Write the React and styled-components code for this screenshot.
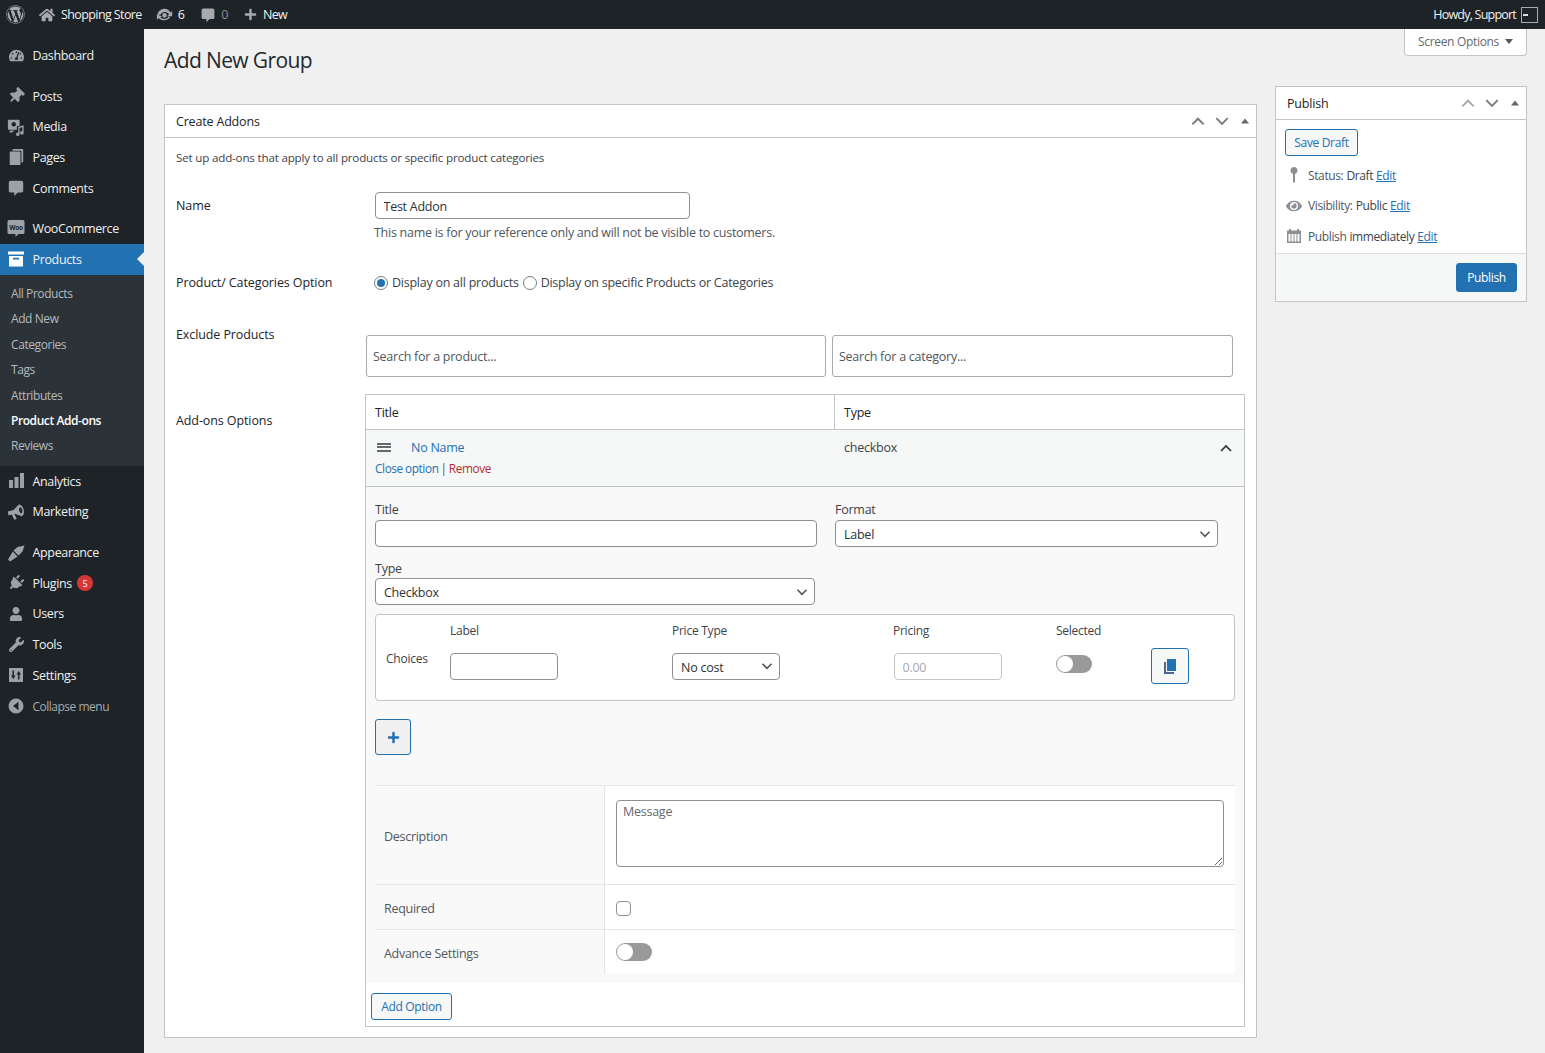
import React from 'react'
import styled, { createGlobalStyle } from 'styled-components'
import {
  FaWordpress, FaHome, FaPlus, FaTachometerAlt, FaThumbtack,
  FaPlug, FaUser, FaWrench, FaEye,
} from 'react-icons/fa'

const chevron = "url(\"data:image/svg+xml,%3Csvg xmlns='http://www.w3.org/2000/svg' width='20' height='20' viewBox='0 0 20 20'%3E%3Cpath d='M5 7.5l5 5 5-5' fill='none' stroke='%2350575e' stroke-width='1.8'/%3E%3C/svg%3E\")"

const GlobalStyle = createGlobalStyle`
  html, body { margin: 0; padding: 0; background: #f0f0f1; }
  body {
    font-family: "Open Sans", "Noto Sans", sans-serif;
    font-size: 12.5px;
    letter-spacing: -0.25px;
    color: #3c434a;
  }
  * { box-sizing: border-box; }
  input, select, textarea, button { font-family: inherit; letter-spacing: inherit; }
`

const Page = styled.div`
  width: 1545px;
  height: 1053px;
  overflow: hidden;
  display: flex;
  flex-direction: column;
`

const TopBar = styled.div`
  height: 29px;
  flex: none;
  background: #1d2327;
  color: #f0f0f1;
  display: flex;
  align-items: center;
  justify-content: space-between;
  padding: 0 7px 0 6px;
  letter-spacing: -0.6px;
`

const TopGroup = styled.div`
  display: flex;
  align-items: center;
`

const TopItem = styled.span`
  display: flex;
  align-items: center;
  gap: ${p => p.$gap ?? 5}px;
  margin-left: ${p => p.$left ?? 0}px;
  color: ${p => (p.$dim ? '#8c8f94' : '#f0f0f1')};
  svg { color: #a7aaad; fill: currentColor; flex: none; }
`

const Howdy = styled.span`
  letter-spacing: -0.78px;
`

const Avatar = styled.div`
  width: 17px;
  height: 16px;
  margin-left: 5px;
  border: 1px solid #a7aaad;
  background: #1d2327;
  display: flex;
  align-items: center;
  padding-left: 1px;
  &::before { content: ''; width: 5px; height: 2px; background: #dcdcde; }
`

const Columns = styled.div`
  flex: 1;
  display: flex;
  min-height: 0;
`

const Sidebar = styled.nav`
  width: 144px;
  flex: none;
  background: #1d2327;
  padding-top: 11px;
`

const MenuItem = styled.div`
  position: relative;
  height: 30.7px;
  margin-top: ${p => (p.$sep ? 10 : 0)}px;
  display: flex;
  align-items: center;
  color: ${p => (p.$dim ? '#a7aaad' : '#f0f0f1')};
  background: ${p => (p.$active ? '#2271b1' : 'transparent')};
  font-size: ${p => (p.$dim ? 12 : 12.5)}px;
  letter-spacing: ${p => (p.$dim ? -0.5 : -0.35)}px;
`

const MenuIcon = styled.span`
  width: 32.5px;
  flex: none;
  display: flex;
  justify-content: center;
  color: ${p => (p.$active ? '#fff' : '#9ca1a7')};
  svg { fill: currentColor; }
`

const ActiveArrow = styled.span`
  position: absolute;
  right: 0;
  top: 50%;
  margin-top: -7px;
  border: 7px solid transparent;
  border-left-width: 0;
  border-right-color: #f0f0f1;
`

const Badge = styled.span`
  width: 16px;
  height: 16px;
  margin-left: 5px;
  border-radius: 50%;
  background: #d63638;
  color: #fff;
  font-size: 9px;
  display: flex;
  align-items: center;
  justify-content: center;
`

const SubMenu = styled.div`
  background: #2c3338;
  padding: 6.25px 0 7.05px;
`

const SubItem = styled.div`
  height: 25.4px;
  line-height: 25.4px;
  padding-left: 11px;
  font-size: 12px;
  letter-spacing: -0.42px;
  color: ${p => (p.$current ? '#fff' : '#b4b9be')};
  font-weight: ${p => (p.$current ? 600 : 400)};
`

const Main = styled.main`
  position: relative;
  flex: 1;
  padding: 16px 18px 0 20px;
`

const ScreenTab = styled.div`
  position: absolute;
  top: 0;
  right: 18px;
  width: 123px;
  height: 27px;
  padding-bottom: 2px;
  background: #fff;
  border: 1px solid #c3c4c7;
  border-top: 0;
  border-radius: 0 0 4px 4px;
  display: flex;
  align-items: center;
  justify-content: center;
  gap: 6px;
  color: #646970;
  font-size: 12px;
  letter-spacing: -0.32px;
`

const Caret = styled.span`
  border: 4px solid transparent;
  border-top: 5px solid #50575e;
  border-bottom: 0;
`

const Title = styled.h1`
  margin: 0;
  font-size: 21px;
  font-weight: 400;
  line-height: 30px;
  letter-spacing: -0.62px;
  color: #23282d;
`

const Layout = styled.div`
  margin-top: 11px;
  display: grid;
  grid-template-columns: 1093px 252px;
  gap: 18px;
  align-items: start;
`

const LeftCol = styled.div`
  padding-top: 18px;
`

const Box = styled.section`
  background: #fff;
  border: 1px solid #c3c4c7;
`

const BoxHead = styled.div`
  height: 33px;
  border-bottom: 1px solid #c3c4c7;
  display: flex;
  align-items: center;
  justify-content: space-between;
  padding: 0 6px 0 11px;
  color: #1d2327;
  font-weight: 500;
  letter-spacing: -0.18px;
`

const Handles = styled.div`
  display: flex;
  align-items: center;
  gap: 7.5px;
  color: #787c82;
  svg { display: block; }
`

const TriangleHandle = styled.svg`
  margin-left: 3px;
`

const BoxBody = styled.div`
  padding: 10px 11px 10px;
`

const Intro = styled.div`
  font-size: 11.6px;
  line-height: 20px;
  letter-spacing: -0.18px;
`

const FormRow = styled.div`
  display: flex;
  align-items: flex-start;
  margin-top: ${p => p.$top}px;
`

const RowLabel = styled.div`
  width: 190px;
  flex: none;
  line-height: 20px;
  color: #1d2327;
  font-weight: 500;
  letter-spacing: -0.1px;
  padding-top: ${p => p.$pad ?? 0}px;
`

const Indent = styled.div`
  margin-left: 9px;
`

const TextInput = styled.input`
  display: block;
  height: 27px;
  width: ${p => (p.$w ? `${p.$w}px` : '100%')};
  margin-left: ${p => p.$left ?? 0}px;
  padding: 2px 7.5px 0;
  font-size: 12.5px;
  color: #2c3338;
  background: #fff;
  border: 1px solid ${p => (p.disabled ? '#c3c4c7' : '#8c8f94')};
  border-radius: 4px;
  &::placeholder { color: ${p => (p.disabled ? '#a7aaad' : '#646970')}; opacity: 1; }
`

const SelectBox = styled.select`
  display: block;
  height: 27px;
  width: ${p => (p.$w ? `${p.$w}px` : '100%')};
  padding: 2px 22px 0 8px;
  font-size: 12.5px;
  color: #2c3338;
  background: #fff ${chevron} no-repeat right 3px center / 18px 18px;
  border: 1px solid #8c8f94;
  border-radius: 4px;
  appearance: none;
`

const HelpText = styled.div`
  margin: 4px 0 -1px -1px;
  line-height: 20px;
  color: #50575e;
  letter-spacing: -0.27px;
`

const RadioRow = styled.div`
  margin: 1px 0 0 8px;
  display: flex;
  align-items: center;
  line-height: 20px;
  color: #3c434a;
  letter-spacing: -0.25px;
`

const Radio = styled.input.attrs({ type: 'radio' })`
  appearance: none;
  width: 14px;
  height: 14px;
  margin: 0 4px 0 ${p => p.$left ?? 0}px;
  border: 1px solid #787c82;
  border-radius: 50%;
  background: #fff;
  display: grid;
  place-items: center;
  &:checked::before {
    content: '';
    width: 8px;
    height: 8px;
    border-radius: 50%;
    background: #2271b1;
  }
`

const SearchRow = styled.div`
  margin-top: 11px;
  display: flex;
  gap: 6px;
`

const SearchBox = styled.input`
  height: 42px;
  width: ${p => p.$w}px;
  padding: 0 6px;
  font-size: 12.5px;
  background: #fff;
  border: 1px solid #a7aaad;
  border-radius: 3px;
  &::placeholder { color: #50575e; opacity: 1; }
`

const OptionsTable = styled.div`
  width: 880px;
  margin-left: -1px;
  border: 1px solid #c3c4c7;
`

const TableHead = styled.div`
  height: 35px;
  display: grid;
  grid-template-columns: 468px 1fr;
  border-bottom: 1px solid #c3c4c7;
  color: #1d2327;
  font-weight: 500;
`

const HeadCell = styled.div`
  display: flex;
  align-items: center;
  padding-left: 9px;
  & + & { border-left: 1px solid #c3c4c7; }
`

const OptionRow = styled.div`
  height: 57px;
  background: #f6f7f7;
  border-bottom: 1px solid #c3c4c7;
  padding: 7px 9px 0;
`

const OptionTop = styled.div`
  display: grid;
  grid-template-columns: 36px 433px 1fr 20px;
  align-items: center;
  height: 20px;
  color: #3c434a;
`

const DragIcon = styled.span`
  width: 14px;
  height: 9px;
  margin-left: 2px;
  border-top: 2px solid #646970;
  border-bottom: 2px solid #646970;
  position: relative;
  &::before {
    content: '';
    position: absolute;
    left: 0;
    right: 0;
    top: 1.5px;
    height: 2px;
    background: #646970;
  }
`

const OptionName = styled.span`
  color: #2271b1;
  font-weight: 500;
`

const CollapseUp = styled.span`
  justify-self: end;
  margin: 2px 2px 0 0;
  color: #2c3338;
  display: flex;
`

const OptionLinks = styled.div`
  margin-top: 1px;
  line-height: 20px;
  font-size: 11.8px;
  letter-spacing: -0.38px;
  word-spacing: -0.6px;
  color: #50575e;
`

const Anchor = styled.a`
  color: ${p => (p.$danger ? '#b32d2e' : '#2271b1')};
  text-decoration: ${p => (p.$under ? 'underline' : 'none')};
`

const OptionPanel = styled.div`
  background: #f9f9f9;
  padding: 12px 9px 9px;
`

const FieldGrid = styled.div`
  display: grid;
  grid-template-columns: 442px 383px;
  gap: 18px;
`

const FieldLabel = styled.div`
  line-height: 22px;
  margin: ${p => p.$top ?? 0}px 0 ${p => p.$bottom ?? -1}px;
  color: #3c434a;
`

const ChoicesBox = styled.div`
  margin-top: 9px;
  width: 860px;
  height: 87px;
  background: #fff;
  border: 1px solid #c3c4c7;
  border-radius: 4px;
  padding: 5px 0 0 10px;
  display: grid;
  grid-template-columns: 64px 222px 221px 163px 95px 38px;
  grid-template-rows: 20px 36px;
  row-gap: 8px;
  align-items: center;
`

const ChoiceHead = styled.div`
  line-height: 20px;
  margin-top: 2px;
  font-size: 12px;
  color: #3c434a;
  grid-column: ${p => p.$col};
`

const ChoiceName = styled(ChoiceHead)`
  margin-top: -14px;
`

const ToggleSwitch = styled.span`
  display: block;
  width: 36px;
  height: 18px;
  border-radius: 9px;
  background: #999;
  position: relative;
  margin-top: ${p => p.$up ?? 0}px;
  &::before {
    content: '';
    position: absolute;
    left: 1px;
    top: 1px;
    width: 16px;
    height: 16px;
    border-radius: 50%;
    background: #fff;
  }
`

const IconButton = styled.button`
  width: ${p => p.$w}px;
  height: 36px;
  padding: 0;
  border: 1px solid #2271b1;
  border-radius: 3px;
  background: ${p => p.$bg ?? '#f6f7f7'};
  color: #2271b1;
  display: flex;
  align-items: center;
  justify-content: center;
`

const AddChoice = styled.div`
  margin: 18px 0 30px;
`

const SettingsTable = styled.div`
  width: 860px;
  border-top: 1px solid #e2e4e7;
`

const SettingRow = styled.div`
  display: grid;
  grid-template-columns: 230px 1fr;
  height: ${p => p.$h}px;
  & + & { border-top: 1px solid #e2e4e7; }
`

const SettingName = styled.div`
  display: flex;
  align-items: center;
  padding: 2px 0 0 9px;
  color: #50575e;
  letter-spacing: -0.28px;
  border-right: 1px solid #e2e4e7;
`

const SettingValue = styled.div`
  background: #fff;
  padding: 0 11px;
  display: flex;
  align-items: center;
`

const MessageValue = styled(SettingValue)`
  align-items: flex-start;
  padding-top: 14px;
`

const MessageArea = styled.textarea`
  display: block;
  width: 100%;
  height: 67px;
  padding: 2px 6px;
  font-size: 12.5px;
  border: 1px solid #8c8f94;
  border-radius: 4px;
  &::placeholder { color: #646970; opacity: 1; }
`

const CheckBox = styled.input.attrs({ type: 'checkbox' })`
  appearance: none;
  width: 15px;
  height: 15px;
  margin: 2px 0 0;
  background: #fff;
  border: 1px solid #8c8f94;
  border-radius: 4px;
`

const TableFoot = styled.div`
  height: 43px;
  padding: 10px 0 0 5px;
`

const SecondaryButton = styled.button`
  height: 27px;
  width: ${p => p.$w}px;
  padding: 0;
  font-size: 12px;
  letter-spacing: -0.33px;
  color: #2271b1;
  background: #f6f7f7;
  border: 1px solid #2271b1;
  border-radius: 3px;
`

const PublishBody = styled.div`
  padding: 9px 9px 0;
`

const MetaList = styled.div`
  margin-top: 4px;
  padding-bottom: 1px;
`

const MetaRow = styled.div`
  height: 30.5px;
  display: flex;
  align-items: center;
  font-size: 12px;
  letter-spacing: -0.38px;
  color: #50575e;
  b { font-weight: 500; color: #3c434a; margin-left: 3px; margin-right: 3px; }
`

const MetaIcon = styled.span`
  width: 17px;
  flex: none;
  display: flex;
  justify-content: center;
  margin-right: 6px;
  color: #8c8f94;
  svg { fill: currentColor; }
`

const PublishFoot = styled.div`
  height: 48px;
  background: #f6f7f7;
  border-top: 1px solid #dcdcde;
  display: flex;
  align-items: center;
  justify-content: flex-end;
  padding-right: 9px;
`

const PrimaryButton = styled.button`
  width: 61px;
  height: 29px;
  padding: 0;
  font-size: 12px;
  letter-spacing: -0.33px;
  color: #fff;
  background: #2271b1;
  border: 1px solid #2271b1;
  border-radius: 3px;
`

const IconChevron = ({ up, color = 'currentColor', size = 14 }) => (
  <svg width={size} height={size} viewBox="0 0 14 14">
    <path d={up ? 'M2 10l5-5 5 5' : 'M2 4.5l5 5 5-5'} fill="none" stroke={color} strokeWidth="1.7" />
  </svg>
)

const BoxHandles = ({ dimUp }) => (
  <Handles>
    <IconChevron up color={dimUp ? '#a7aaad' : '#787c82'} size={16} />
    <IconChevron size={16} />
    <TriangleHandle width="10" height="10" viewBox="0 0 10 10"><path d="M1 7.5L5 2.5l4 5z" fill="#646970" /></TriangleHandle>
  </Handles>
)

const UpdatesIcon = () => (
  <svg width="17" height="17" viewBox="0 0 20 20">
    <path d="M10.2 3.3c2.9 0 5.4 1.7 6.5 4.2L19 6v6h-6l2.300-1.700c-.8-1.900-2.700-3.200-5-3.200-2.200 0-4.100 1.300-5 3.200H1.500c1-3.900 4.500-7 8.700-7zM10 8.300a2.700 2.700 0 110 5.400 2.700 2.700 0 010-5.400zM1 10v6l2.300-1.500c1.400 1.500 3.600 2.400 6.700 2.400 3 0 5.600-1.700 6.700-4.200h-2.200c-.9 1.900-2.700 2.500-4.500 2.500-2 0-3.700-.7-4.700-1.900L7 12z" />
  </svg>
)

const CommentIcon = ({ size = 18 }) => (
  <svg width={size} height={size} viewBox="0 0 20 20">
    <path d="M4 2h12c1.100 0 2 .9 2 2v9c0 1.100-.9 2-2 2h-4l-4 4v-4H4c-1.100 0-2-.9-2-2V4c0-1.100.9-2 2-2z" />
  </svg>
)

const MediaIcon = () => (
  <svg width="18" height="18" viewBox="0 0 20 20">
    <path d="M2 2h11a1 1 0 011 1v5.500l-3 .8V13H6l-1 0H2a1 1 0 01-1-1V3a1 1 0 011-1zm5.500 2.500a2.500 2.500 0 100 5 2.500 2.500 0 000-5zM18.500 8v8.500a2 2 0 11-1.500-1.900V10.200l-3 .8v7a2 2 0 11-1.500-1.900V9.600zM3 14v2h3a2.200 2.200 0 012.500-1.500V14z" fillRule="evenodd" />
  </svg>
)

const PagesIcon = () => (
  <svg width="18" height="18" viewBox="0 0 20 20">
    <path d="M7 1h10a1 1 0 011 1v13a1 1 0 01-1 1h-1V4a1 1 0 00-1-1H6V2a1 1 0 011-1zM4 4h10a1 1 0 011 1v13a1 1 0 01-1 1H4a1 1 0 01-1-1V5a1 1 0 011-1z" />
  </svg>
)

const WooIcon = () => (
  <svg width="18" height="19" viewBox="0 0 18 19">
    <path d="M2 1h14a1.500 1.500 0 011.500 1.500v11a1.500 1.500 0 01-1.500 1.500h-4.500L8.500 18v-3H2A1.500 1.500 0 01.500 13.500v-11A1.500 1.500 0 012 1z" />
    <text x="9" y="10.500" textAnchor="middle" fontSize="6.500" fontWeight="700" fill="#1d2327" fontFamily="Open Sans, sans-serif">Woo</text>
  </svg>
)

const ProductsIcon = () => (
  <svg width="18" height="18" viewBox="0 0 18 18">
    <path d="M1 1.500h16v3H1zM2 6h14v10.500H2zM6 7.800v1.700h6V7.800z" fillRule="evenodd" />
  </svg>
)

const AnalyticsIcon = () => (
  <svg width="18" height="18" viewBox="0 0 18 18">
    <path d="M2 8h4v8H2zM7.500 5h4v11h-4zM13 1h4v15h-4z" />
  </svg>
)

const MarketingIcon = () => (
  <svg width="18" height="18" viewBox="0 0 18 18">
    <path
      transform="rotate(-14 9 9)"
      d="M1 6.500h6L13.500 2.500c2.200 0 3.500 2.800 3.500 6s-1.300 6-3.500 6L7.500 10.500H7l1 5.500H5.500L4.300 10.500H1zM14 5.500c-.9 0-1.500 1.300-1.500 3s.6 3 1.500 3 1.500-1.300 1.500-3-.6-3-1.500-3z"
      fillRule="evenodd"
    />
  </svg>
)

const AppearanceIcon = () => (
  <svg width="18" height="18" viewBox="0 0 18 18">
    <path d="M6.500 6.500L10.500 3l7-1.500-2 6-4 4zM5.800 7.500l4.700 5L3 17.500 1 15.500z" />
  </svg>
)

const SettingsIcon = () => (
  <svg width="16" height="16" viewBox="0 0 16 16">
    <path d="M1 1h14v14H1zM4.500 3.500v5H3l2.300 3.500L7.500 8.500H6v-5zM10 12.500h1.500v-5H13L10.700 4 8.500 7.500H10z" fillRule="evenodd" />
  </svg>
)

const CollapseIcon = () => (
  <svg width="16" height="16" viewBox="0 0 16 16">
    <path d="M8 .500a7.500 7.500 0 110 15 7.500 7.500 0 010-15zM10.500 3.800L5 8l5.500 4.200z" fillRule="evenodd" />
  </svg>
)

const PinIcon = () => (
  <svg width="14" height="18" viewBox="0 0 14 18">
    <path d="M7 1a3.600 3.600 0 011 7v8.500H6V8a3.600 3.600 0 011-7z" />
  </svg>
)

const CalendarIcon = () => (
  <svg width="16" height="16" viewBox="0 0 16 16">
    <path d="M1 2.500h2V1h2v1.500h6V1h2v1.500h2V15H1zM2.500 6v7.500h2V6zM5.500 6v7.500h2V6zM8.500 6v7.500h2V6zM11.500 6v7.500h2V6z" fillRule="evenodd" />
  </svg>
)

const CopyIcon = () => (
  <svg width="16" height="17" viewBox="0 0 16 17">
    <path d="M5 1h9v12H5z" fill="#2271b1" />
    <path d="M2 4h2v10h8v2H2z" fill="#50678f" />
  </svg>
)

const menuTop = [
  { label: 'Posts', icon: <FaThumbtack size={16} style={{ transform: 'rotate(45deg)' }} />, sep: true },
  { label: 'Media', icon: <MediaIcon /> },
  { label: 'Pages', icon: <PagesIcon /> },
  { label: 'Comments', icon: <CommentIcon /> },
]

const subItems = ['All Products', 'Add New', 'Categories', 'Tags', 'Attributes', 'Product Add-ons', 'Reviews']

const menuBottom = [
  { label: 'Analytics', icon: <AnalyticsIcon /> },
  { label: 'Marketing', icon: <MarketingIcon /> },
  { label: 'Appearance', icon: <AppearanceIcon />, sep: true },
  { label: 'Plugins', icon: <FaPlug size={16} style={{ transform: 'rotate(45deg)' }} />, badge: 5 },
  { label: 'Users', icon: <FaUser size={14} /> },
  { label: 'Tools', icon: <FaWrench size={15} /> },
  { label: 'Settings', icon: <SettingsIcon /> },
]

const Menu = ({ label, icon, sep, active, badge, dim }) => (
  <MenuItem $sep={sep} $active={active} $dim={dim}>
    <MenuIcon $active={active}>{icon}</MenuIcon>
    {label}
    {badge && <Badge>{badge}</Badge>}
    {active && <ActiveArrow />}
  </MenuItem>
)

export default function App() {
  return (
    <Page>
      <GlobalStyle />
      <TopBar>
        <TopGroup>
          <TopItem><FaWordpress size={19} /></TopItem>
          <TopItem $left={14} $gap={6}><FaHome size={16} />Shopping Store</TopItem>
          <TopItem $left={14} $gap={5}><UpdatesIcon />6</TopItem>
          <TopItem $left={16} $gap={5} $dim><CommentIcon size={16} />0</TopItem>
          <TopItem $left={16} $gap={6}><FaPlus size={13} />New</TopItem>
        </TopGroup>
        <TopGroup>
          <Howdy>Howdy, Support</Howdy>
          <Avatar />
        </TopGroup>
      </TopBar>
      <Columns>
        <Sidebar>
          <Menu label="Dashboard" icon={<FaTachometerAlt size={15} />} />
          {menuTop.map(item => <Menu key={item.label} {...item} />)}
          <Menu label="WooCommerce" icon={<WooIcon />} sep />
          <Menu label="Products" icon={<ProductsIcon />} active />
          <SubMenu>
            {subItems.map(item => (
              <SubItem key={item} $current={item === 'Product Add-ons'}>{item}</SubItem>
            ))}
          </SubMenu>
          {menuBottom.map(item => <Menu key={item.label} {...item} />)}
          <Menu label="Collapse menu" icon={<CollapseIcon />} dim />
        </Sidebar>
        <Main>
          <ScreenTab>Screen Options <Caret /></ScreenTab>
          <Title>Add New Group</Title>
          <Layout>
            <LeftCol>
              <Box>
                <BoxHead>Create Addons <BoxHandles /></BoxHead>
                <BoxBody>
                  <Intro>Set up add-ons that apply to all products or specific product categories</Intro>
                  <FormRow $top={24}>
                    <RowLabel $pad={4}>Name</RowLabel>
                    <Indent>
                      <TextInput $w={315} defaultValue="Test Addon" />
                      <HelpText>This name is for your reference only and will not be visible to customers.</HelpText>
                    </Indent>
                  </FormRow>
                  <FormRow $top={30}>
                    <RowLabel $pad={1}>Product/ Categories Option</RowLabel>
                    <RadioRow>
                      <Radio name="scope" defaultChecked />
                      Display on all products
                      <Radio name="scope" $left={4} />
                      Display on specific Products or Categories
                    </RadioRow>
                  </FormRow>
                  <FormRow $top={31}>
                    <RowLabel $pad={1}>Exclude Products</RowLabel>
                    <SearchRow>
                      <SearchBox $w={460} placeholder="Search for a product..." />
                      <SearchBox $w={401} placeholder="Search for a category..." />
                    </SearchRow>
                  </FormRow>
                  <FormRow $top={17}>
                    <RowLabel $pad={17}>Add-ons Options</RowLabel>
                    <OptionsTable>
                      <TableHead>
                        <HeadCell>Title</HeadCell>
                        <HeadCell>Type</HeadCell>
                      </TableHead>
                      <OptionRow>
                        <OptionTop>
                          <DragIcon />
                          <OptionName>No Name</OptionName>
                          <span>checkbox</span>
                          <CollapseUp><IconChevron up size={14} /></CollapseUp>
                        </OptionTop>
                        <OptionLinks>
                          <Anchor>Close option</Anchor> | <Anchor $danger>Remove</Anchor>
                        </OptionLinks>
                      </OptionRow>
                      <OptionPanel>
                        <FieldGrid>
                          <div>
                            <FieldLabel>Title</FieldLabel>
                            <TextInput />
                          </div>
                          <div>
                            <FieldLabel>Format</FieldLabel>
                            <SelectBox defaultValue="Label"><option>Label</option></SelectBox>
                          </div>
                        </FieldGrid>
                        <FieldLabel $top={11} $bottom={-2}>Type</FieldLabel>
                        <SelectBox $w={440} defaultValue="Checkbox"><option>Checkbox</option></SelectBox>
                        <ChoicesBox>
                          <ChoiceHead $col={2}>Label</ChoiceHead>
                          <ChoiceHead $col={3}>Price Type</ChoiceHead>
                          <ChoiceHead $col={4}>Pricing</ChoiceHead>
                          <ChoiceHead $col={5}>Selected</ChoiceHead>
                          <ChoiceName $col={1}>Choices</ChoiceName>
                          <TextInput $w={108} />
                          <SelectBox $w={108} defaultValue="No cost"><option>No cost</option></SelectBox>
                          <TextInput $w={108} $left={1} disabled placeholder="0.00" />
                          <ToggleSwitch $up={-4} />
                          <IconButton $w={38}><CopyIcon /></IconButton>
                        </ChoicesBox>
                        <AddChoice>
                          <IconButton $w={36} $bg="#f0f0f1"><FaPlus size={13} /></IconButton>
                        </AddChoice>
                        <SettingsTable>
                          <SettingRow $h={98}>
                            <SettingName>Description</SettingName>
                            <MessageValue><MessageArea placeholder="Message" /></MessageValue>
                          </SettingRow>
                          <SettingRow $h={45}>
                            <SettingName>Required</SettingName>
                            <SettingValue><CheckBox /></SettingValue>
                          </SettingRow>
                          <SettingRow $h={45}>
                            <SettingName>Advance Settings</SettingName>
                            <SettingValue><ToggleSwitch /></SettingValue>
                          </SettingRow>
                        </SettingsTable>
                      </OptionPanel>
                      <TableFoot>
                        <SecondaryButton $w={81}>Add Option</SecondaryButton>
                      </TableFoot>
                    </OptionsTable>
                  </FormRow>
                </BoxBody>
              </Box>
            </LeftCol>
            <Box>
              <BoxHead>Publish <BoxHandles dimUp /></BoxHead>
              <PublishBody>
                <SecondaryButton $w={73}>Save Draft</SecondaryButton>
                <MetaList>
                  <MetaRow><MetaIcon><PinIcon /></MetaIcon>Status:<b>Draft</b><Anchor $under>Edit</Anchor></MetaRow>
                  <MetaRow><MetaIcon><FaEye size={16} /></MetaIcon>Visibility:<b>Public</b><Anchor $under>Edit</Anchor></MetaRow>
                  <MetaRow><MetaIcon><CalendarIcon /></MetaIcon>Publish <b>immediately</b><Anchor $under>Edit</Anchor></MetaRow>
                </MetaList>
              </PublishBody>
              <PublishFoot><PrimaryButton>Publish</PrimaryButton></PublishFoot>
            </Box>
          </Layout>
        </Main>
      </Columns>
    </Page>
  )
}
